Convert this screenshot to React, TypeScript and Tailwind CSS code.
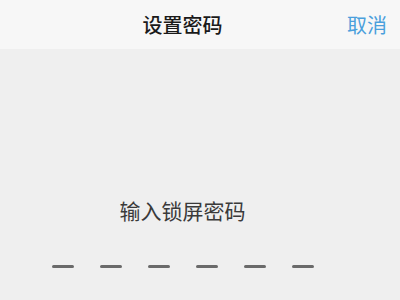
import React from "react";

const App = () => {
  const dots = [0, 1, 2, 3, 4, 5];

  return (
    <div
      className="w-[400px] h-[300px] bg-[#efefef] flex flex-col overflow-hidden"
      style={{ fontFamily: '"Noto Sans CJK SC", "Noto Sans", sans-serif' }}
    >
      <div className="h-[49px] bg-[#f7f7f7] flex items-center shrink-0">
        <div className="w-[347px] pl-[18px] text-center text-[20px] leading-none text-[#1a1a1a] font-medium">
          设置密码
        </div>
        <div className="whitespace-nowrap text-[20px] leading-none text-[#4a9fdc]">
          取消
        </div>
      </div>
      <div className="flex flex-col w-[365px] items-center">
        <div className="mt-[151px] text-[21px] leading-none text-[#3a3a3a]">
          输入锁屏密码
        </div>
        <div className="mt-[44px] flex gap-[26px]">
          {dots.map((d) => (
            <div key={d} className="w-[22px] h-[3px] rounded-full bg-[#6a6a6a]" />
          ))}
        </div>
      </div>
    </div>
  );
};

export default App;
